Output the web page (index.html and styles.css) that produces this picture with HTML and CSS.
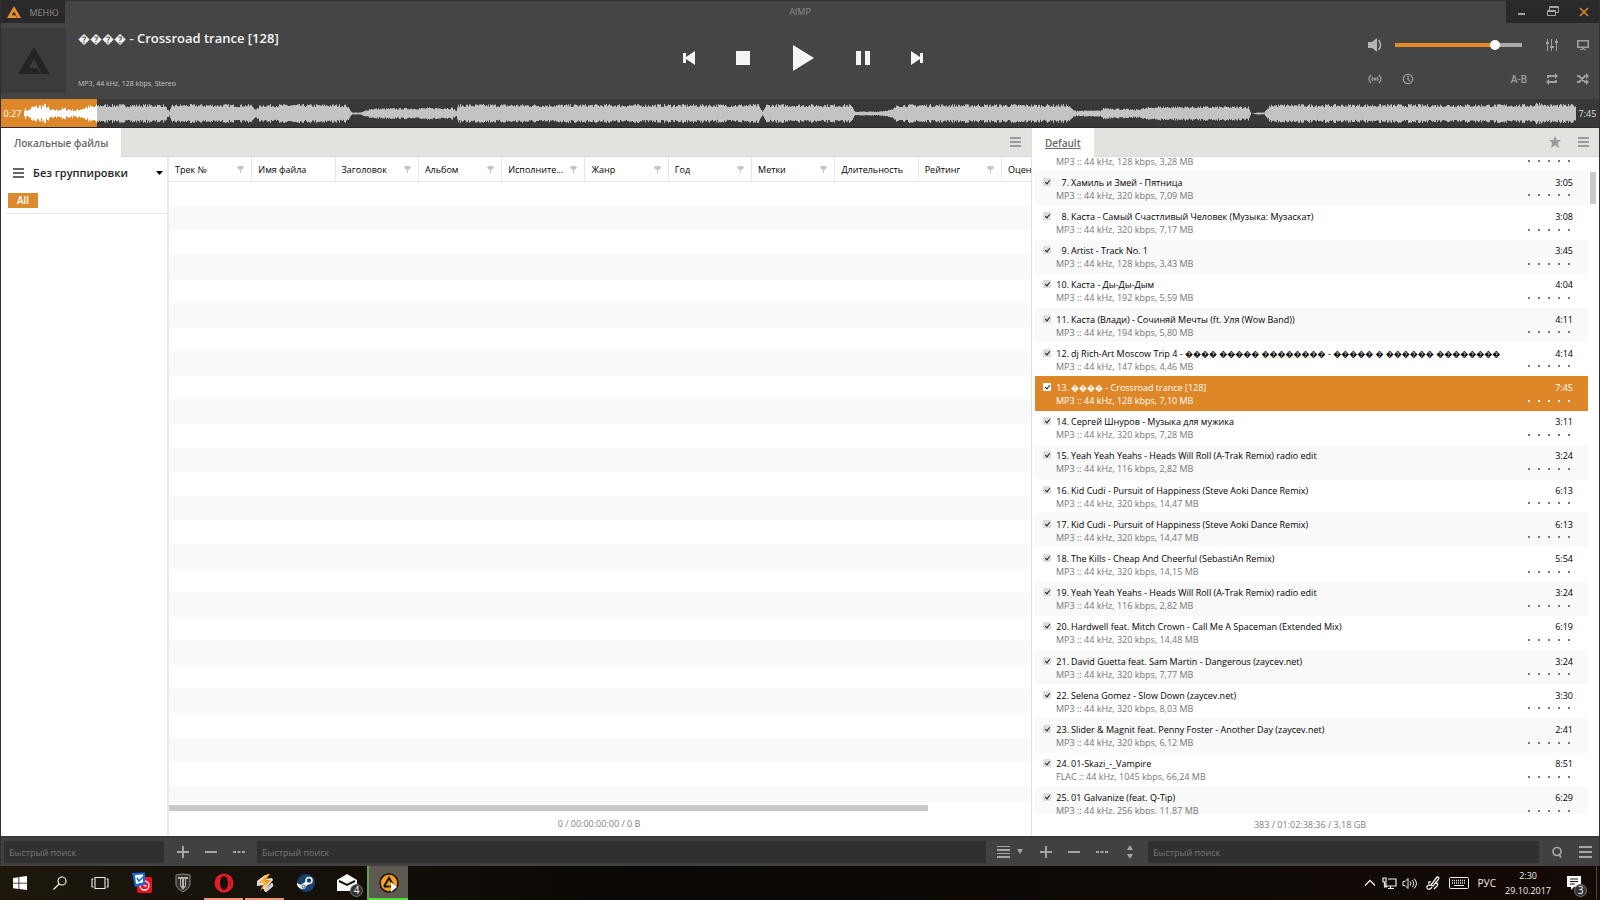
FILE: index.html
```html
<!DOCTYPE html>
<html lang="ru">
<head>
<meta charset="utf-8">
<title>AIMP</title>
<link rel="stylesheet" href="styles.css">
</head>
<body>
<div class="desktop">
<main class="app">
  <header class="titlebar">
    <button class="menu-button" type="button">
      <svg width="14" height="12" viewBox="0 0 32 27" fill="currentColor"><path fill-rule="evenodd" d="M0 27 16 0l16 27h-8l-8-15-5 9h8l4 6z"/></svg>
      <span>МЕНЮ</span>
    </button>
    <h1 class="app-title">AIMP</h1>
    <div class="window-buttons">
      <button type="button" aria-label="Свернуть"><svg width="12" height="12" fill="#a5a5a5"><path d="M2 7h7v2H2z"/></svg></button>
      <button type="button" aria-label="Развернуть"><svg width="12" height="12" fill="none" stroke="#a5a5a5"><path d="M.5 4.500h8v5h-8zM.5 5.500h8M2.500 4V.5h9v6H9M2.500 1.500h9"/></svg></button>
      <button type="button" aria-label="Закрыть"><svg width="12" height="12" stroke="#e08a2c" stroke-width="1.500"><path d="m2 2 8 8M10 2 2 10"/></svg></button>
    </div>
  </header>

  <section class="player">
    <div class="now-playing">
      <div class="cover"><svg width="32" height="27" viewBox="0 0 32 27" fill="#232323"><path d="M0 27 16 0l16 27h-8l-8-15-5 9h8l4 6z"/></svg></div>
      <div class="track-info">
        <h2><span class="unknown">����</span> - Crossroad trance [128]</h2>
        <p>MP3, 44 kHz, 128 kbps, Stereo</p>
      </div>
    </div>
    <div class="transport">
      <button type="button" aria-label="Назад"><svg width="14" height="14" fill="#f5f5f5"><path d="M1 2h3v4l9-6v14L4 8v4H1z"/></svg></button>
      <button type="button" aria-label="Стоп"><svg width="14" height="14" fill="#f5f5f5"><path d="M0 0h14v14H0z"/></svg></button>
      <button class="play" type="button" aria-label="Играть"><svg width="22" height="26" fill="#f5f5f5"><path d="M1 0v26l21-13z"/></svg></button>
      <button type="button" aria-label="Пауза"><svg width="14" height="14" fill="#f5f5f5"><path d="M0 0h5v14H0zM9 0h5v14H9z"/></svg></button>
      <button type="button" aria-label="Вперёд"><svg width="14" height="14" fill="#f5f5f5"><path d="M13 2h-3v4L1 0v14l9-6v4h3z"/></svg></button>
    </div>
    <div class="options">
      <button class="icon" type="button" aria-label="Звук"><svg width="16" height="16" fill="#b5b5b5"><path d="M1 5h4l5-4v14l-5-4H1z"/><path d="M11.500 3q4 5 0 10" fill="none" stroke="#b5b5b5" stroke-width="1.500"/></svg></button>
      <input class="volume" type="range" min="0" max="100" value="81" aria-label="Громкость">
      <button class="icon" type="button" aria-label="Эквалайзер"><svg width="12" height="12" fill="#a0a0a0"><path d="M1 0h1v12H1zM5 0h1v12H5zM10 0h1v12h-1zM0 3h3v2H0zM4 7h4v2H4zM9 2h3v2H9z"/></svg></button>
      <button class="icon" type="button" aria-label="Визуализация"><svg width="12" height="12" fill="#a0a0a0"><path d="M0 1h12v8H0zM1.500 2.500v5h9v-5zM5 9h2v1.500H5zM3 10h6v1H3z" fill-rule="evenodd"/></svg></button>
      <button class="icon" type="button" aria-label="Радио"><svg width="14" height="12" fill="none" stroke="#a0a0a0" stroke-width="1.200"><path d="M3 2Q-1 6 3 10M5 4Q3 6 5 8M11 2q4 4 0 8M9 4q2 2 0 4"/><circle cx="7" cy="6" r="1"/></svg></button>
      <button class="icon clock-icon" type="button" aria-label="Таймер"><svg width="12" height="12" fill="none" stroke="#a0a0a0" stroke-width="1.300"><circle cx="6" cy="6" r="4.700"/><path d="M6 3v3.500l2 1.500"/></svg></button>
      <button class="icon ab" type="button">A-B</button>
      <button class="icon" type="button" aria-label="Повтор"><svg width="12" height="12" fill="#a0a0a0"><path d="M1 5V2h8V0l3 3-3 3V4H3v1zM11 7v3H3v2L0 9l3-3v2h6V7z"/></svg></button>
      <button class="icon" type="button" aria-label="Случайный порядок"><svg width="12" height="12" fill="none" stroke="#a0a0a0" stroke-width="1.900"><path d="M0 3h2l6 6h2M0 9h2l6-6h2"/><path d="m9 0 3 3-3 3zM9 6l3 3-3 3z" fill="#a0a0a0" stroke="none"/></svg></button>
    </div>
  </section>

  <section class="seek" aria-label="Позиция">
    <span class="time">0:27</span>
    <svg class="wave" viewBox="0 0 1552 28" preserveAspectRatio="none"><path id="wave-played" fill="#fff"/><path id="wave-rest" fill="#c3c3c3"/></svg>
    <span class="time">7:45</span>
  </section>

  <div class="panes">
    <section class="library">
      <div class="tabs">
        <a class="tab" href="#library">Локальные файлы</a>
        <button class="icon push" type="button" aria-label="Меню"><svg width="11" height="10" fill="#9b9b9b"><path d="M0 0h11v2H0zM0 4h11v2H0zM0 8h11v2H0z"/></svg></button>
      </div>
      <div class="library-body">
        <aside class="sidebar">
          <button class="grouping" type="button">
            <svg width="11" height="10" fill="#666"><path d="M0 0h11v2H0zM0 4h11v2H0zM0 8h11v2H0z"/></svg>
            <span>Без группировки</span>
            <svg width="7" height="4"><path d="M0 0h7L3.500 4z"/></svg>
          </button>
          <div class="groups"><button class="chip" type="button">All</button></div>
        </aside>
        <div class="files">
          <table class="columns">
            <thead><tr id="columns"></tr></thead>
          </table>
          <div class="stripes" id="stripes"></div>
          <div class="hscroll"><div class="hthumb"></div></div>
          <p class="summary">0 / 00:00:00:00 / 0 B</p>
        </div>
      </div>
    </section>

    <section class="playlist">
      <div class="tabs">
        <a class="tab current" href="#default">Default</a>
        <button class="icon push" type="button" aria-label="Избранное"><svg width="12" height="12" fill="#9b9b9b"><path d="m6 0 1.800 4H12L8.800 7l1.200 5-4-2.700L2 12l1.200-5L0 4h4.200z"/></svg></button>
        <button class="icon" type="button" aria-label="Меню"><svg width="11" height="10" fill="#9b9b9b"><path d="M0 0h11v2H0zM0 4h11v2H0zM0 8h11v2H0z"/></svg></button>
      </div>
      <div class="list-area">
        <div class="list-clip"><ol class="tracks" id="tracks"></ol></div>
        <div class="vscroll"><div class="vthumb"></div></div>
      </div>
      <p class="summary">383 / 01:02:38:36 / 3,18 GB</p>
    </section>
  </div>

  <footer class="toolbar">
    <div class="tools library-tools">
      <input class="search small" type="text" placeholder="Быстрый поиск" aria-label="Поиск групп">
      <div class="tool-group">
        <button class="tool" type="button" aria-label="Добавить"><svg width="12" height="12" fill="#a5a5a5"><path d="M5 0h2v5h5v2H7v5H5V7H0V5h5z"/></svg></button>
        <button class="tool" type="button" aria-label="Удалить"><svg width="12" height="12" fill="#a5a5a5"><path d="M0 5h12v2H0z"/></svg></button>
        <button class="tool" type="button" aria-label="Ещё"><svg width="12" height="12" fill="#a5a5a5"><path d="M0 5h3v2H0zM4.500 5h3v2h-3zM9 5h3v2H9z"/></svg></button>
      </div>
      <input class="search" type="text" placeholder="Быстрый поиск" aria-label="Поиск файлов">
      <button class="view" type="button" aria-label="Вид"><svg width="26" height="12" fill="#a5a5a5"><path d="M0 0h13v1H0zM0 3h13v2H0zM0 7h13v1H0zM0 10h13v2H0zM20 3h6l-3 5z"/></svg></button>
    </div>
    <div class="tools playlist-tools">
      <div class="tool-group">
        <button class="tool" type="button" aria-label="Добавить"><svg width="12" height="12" fill="#a5a5a5"><path d="M5 0h2v5h5v2H7v5H5V7H0V5h5z"/></svg></button>
        <button class="tool" type="button" aria-label="Удалить"><svg width="12" height="12" fill="#a5a5a5"><path d="M0 5h12v2H0z"/></svg></button>
        <button class="tool" type="button" aria-label="Ещё"><svg width="12" height="12" fill="#a5a5a5"><path d="M0 5h3v2H0zM4.500 5h3v2h-3zM9 5h3v2H9z"/></svg></button>
        <button class="tool" type="button" aria-label="Сортировка"><svg width="6" height="14" fill="#a5a5a5"><path d="m0 5 3-5 3 5zM0 9h6l-3 5z"/></svg></button>
      </div>
      <input class="search" type="text" placeholder="Быстрый поиск" aria-label="Поиск в плейлисте">
      <button class="tool" type="button" aria-label="Найти"><svg width="12" height="12" fill="none" stroke="#a5a5a5" stroke-width="1.700"><circle cx="6" cy="5.500" r="4"/><path d="m7.500 8 2.500 3.500"/></svg></button>
      <button class="tool" type="button" aria-label="Меню"><svg width="13" height="12" fill="#a5a5a5"><path d="M0 0h13v2H0zM0 5h13v2H0zM0 10h13v2H0z"/></svg></button>
    </div>
  </footer>
</main>

<nav class="taskbar">
  <div class="launch">
    <button type="button" aria-label="Пуск"><svg width="14" height="14" fill="#fff"><path d="M0 2l5.500-.8v5.500H0zM6.300 1.100 14 0v6.700H6.300zM0 7.400h5.500V13L0 12.200zM6.300 7.400H14V14l-7.700-1z"/></svg></button>
    <button type="button" aria-label="Поиск"><svg width="14" height="14" fill="none" stroke="#eee" stroke-width="1.200"><circle cx="9" cy="5" r="4"/><path d="m6 8-5.500 5.500"/></svg></button>
    <button type="button" aria-label="Представление задач"><svg width="18" height="14" fill="none" stroke="#eee" stroke-width="1.100"><path d="M4 1.500h10v11H4zM2.500 3H1v8h1.500M15.500 3H17v8h-1.500"/></svg></button>
  </div>
  <div class="apps">
    <button type="button" aria-label="Проверка"><svg width="22" height="22"><rect x="6" y="5" width="15" height="16" rx="2" fill="#e8131d"/><circle cx="13.500" cy="13.500" r="4.500" fill="none" stroke="#fff" stroke-width="1.300"/><path d="M13 11v3h3" fill="none" stroke="#fff"/><path d="m1 1 13-.5v12L4 15z" fill="#1467e8"/><path d="m4 3 8-.5v8L5 12z" fill="#fff"/><path d="m6 6 2 3 4-4" fill="none" stroke="#1467e8" stroke-width="1.500"/></svg></button>
    <button type="button" aria-label="World of Tanks"><svg width="16" height="20"><path d="M1 2 8 1l7 1v10q-1 4-7 7-6-3-7-7z" fill="#34312d" stroke="#8d8b86"/><path d="M3 4h10v2h-2v7l-3 4-3-4V6H3z" fill="#b4b2ad"/><path d="M6.500 6v7M9.500 6v7" stroke="#34312d"/></svg></button>
    <button class="running" type="button" aria-label="Opera"><svg width="20" height="20"><circle cx="10" cy="10" r="9.500" fill="#e51c2b"/><ellipse cx="10" cy="10" rx="4" ry="7" fill="#130f09"/><path d="M12 1.500q10 8.500 0 17 4-3 4-8.500t-4-8.500" fill="#a70f1c"/></svg></button>
    <button class="running" type="button" aria-label="Winamp"><svg width="20" height="20"><path d="m2 8 8-6h3l-3 4 7-1 1 2-8 9H7l3-4-8 1z" fill="#e6e1d8"/><path d="m9 17 8-7 1 3-7 6zM2 11l6-5" fill="#d5d0c6" stroke="#d5d0c6"/><path d="m12 1-8 9h5l-4 8 11-11h-5l4-6z" fill="#f5951e"/><path d="M12 2 6 9h5l-3 6" fill="none" stroke="#ffcf5b"/></svg></button>
    <button type="button" aria-label="Steam"><svg width="20" height="20"><circle cx="10" cy="10" r="9" fill="#17426f"/><path d="M1 10q4 3 5 1l5-3 2 3-3 2q0 3-3 3-4 0-6-4z" fill="#fff"/><circle cx="13" cy="7.500" r="3" fill="#17426f" stroke="#fff" stroke-width="1.500"/><circle cx="7.500" cy="13.500" r="1.500" fill="none" stroke="#17426f"/></svg></button>
    <button type="button" aria-label="Почта"><svg width="20" height="18"><path d="M0 6 10 0l10 6v11H0z" fill="#fff"/><path d="m2 7 8 4 8-4" fill="none" stroke="#1a150c" stroke-width="2"/></svg><span class="badge mail-badge">4</span></button>
    <button class="active" type="button" aria-label="AIMP"><svg width="20" height="20"><circle cx="10" cy="10" r="9" fill="#f2a01f" stroke="#171106" stroke-width="1.500"/><path d="M5 13.500 10 5l5 8.500h-4.500M5 13.500h5" fill="none" stroke="#171106" stroke-width="2"/><path d="m12 9 6 5-6 5z" fill="#fff"/></svg></button>
  </div>
  <div class="tray">
    <svg class="chevron" width="12" height="8" fill="none" stroke="#eee" stroke-width="1.300"><path d="m1 6.500 5-5 5 5"/></svg>
    <svg width="15" height="13" fill="none" stroke="#eee" stroke-width="1.200"><path d="M6 2h8v7H4V6M6 11.500h6M8.500 9v3M1 1h3v4H1zM2.500 5v5H5"/></svg>
    <svg class="sound" width="15" height="13" fill="none" stroke="#eee"><path d="M1 4.500h2l3-3v10l-3-3H1zM8 4.500q2 2 0 4M10 3q3.500 3.500 0 7M12 1.500q5 5 0 10"/></svg>
    <svg width="14" height="14" fill="none" stroke="#eee" stroke-width="1.300"><path d="M5 9 11 1q3 0 1 3L7 10zM5 6q-3-1-2 2M5 9q-5 0-4 3 2 3 5-1M9 7q4 0 2 3l-3 3"/></svg>
    <svg width="20" height="12" fill="none" stroke="#eee"><rect x=".5" y=".5" width="19" height="11" rx="1"/><path d="M3 3.500h14M3 6h14" stroke-dasharray="1 1" stroke-width="1.300"/><path d="M5 8.500h10"/></svg>
    <span class="lang">РУС</span>
    <time class="clock"><span>2:30</span><span>29.10.2017</span></time>
    <button class="notify" type="button" aria-label="Уведомления"><svg width="14" height="14"><path d="M0 0h14v11H7l-3 3v-3H0z" fill="#fff"/><path d="M3 3h8M3 5.500h8M3 8h5" stroke="#1a150c"/></svg><span class="badge">3</span></button>
  </div>
</nav>
</div>
<script src="app.js"></script>
</body>
</html>
```

FILE: styles.css
```css
* { box-sizing: border-box; }
body { margin: 0; font-family: "Open Sans", "Noto Sans", "DejaVu Sans", sans-serif; font-size: 9px; line-height: 13px; color: #000; }
h1, h2, p, ol { margin: 0; padding: 0; font-weight: 400; }
button { border: 0; padding: 0; background: none; font: inherit; color: inherit; display: flex; align-items: center; justify-content: center; }
svg { display: block; flex: none; }
.desktop { height: 100vh; display: flex; flex-direction: column; overflow: hidden; }
.app { flex: 1; min-height: 0; display: flex; flex-direction: column; background: #454545; border: solid #2f2f2f; border-width: 1px 1px 0; }

.titlebar { display: grid; grid-template-columns: 1fr auto 1fr; height: 21px; flex: none; }
.menu-button { background: #292929; color: #e78f2e; width: 64px; gap: 8px; }
.menu-button span { color: #8f8f8a; }
.app-title { font-size: 9px; line-height: 22px; color: #8e8e8e; }
.window-buttons { justify-self: end; display: flex; background: #292929; }
.window-buttons button { width: 31px; }

.player { display: grid; grid-template-columns: 1fr auto 1fr; height: 77px; flex: none; }
.now-playing { display: flex; gap: 12px; padding-top: 6px; }
.cover { width: 65px; height: 65px; background: #3b3b3b; display: flex; align-items: center; justify-content: center; }
.track-info { display: flex; flex-direction: column; justify-content: space-between; color: #f5f5f5; padding-bottom: 6px; }
.track-info h2 { font-size: 13px; line-height: 21px; font-weight: 600; }
.track-info .unknown { font-size: 12px; }
.track-info p { font-size: 7px; line-height: 18px; color: #c4c4c4; }
.transport { display: flex; align-items: center; padding-left: 6px; padding-bottom: 5px; }
.transport button { width: 54px; height: 40px; }
.transport .play { width: 66px; }
.options { justify-self: end; display: grid; grid-template-columns: 32px 33px 1fr 36px 30px 32px; grid-template-rows: 34px 34px; width: 240px; padding-top: 6px; }
.icon { min-width: 28px; }
.volume { grid-column: 2 / 5; margin: auto 10px auto 4px; width: 127px; height: 12px; appearance: none; background: linear-gradient(to right, #e58a2b 79%, #aaa 0) center / 100% 4px no-repeat; }
.volume::-webkit-slider-thumb { appearance: none; width: 10px; height: 10px; border-radius: 50%; background: #fff; }
.ab { grid-column: 4; color: #a0a0a0; font-weight: 600; font-size: 10px; }
.clock-icon { grid-column: 2; }

.seek { display: flex; align-items: center; height: 29px; flex: none; border-bottom: 1px solid #282828; background: linear-gradient(to right, #dd8728 96px, #383838 0); }
.time { width: 23px; padding-top: 1px; text-align: center; color: #ddd; }
.seek .time:first-child { color: #fff; }
.wave { flex: 1; min-width: 0; height: 28px; }

.panes { flex: 1; min-height: 0; display: grid; grid-template-columns: 1030fr 568fr; background: #fff; }
.library, .playlist { min-width: 0; min-height: 0; display: flex; flex-direction: column; }
.playlist { border-left: 1px solid #dfe1e1; }
.tabs { display: flex; height: 29px; flex: none; background: #e2e3de; border-bottom: 1px solid #dadbd6; padding-right: 2px; }
.tab { display: flex; align-items: center; padding: 1px 13px 0; margin-bottom: -1px; background: #fff; color: #666; font-size: 10px; font-weight: 600; text-decoration: none; }
.tab.current { text-decoration: underline; }
.push { margin-left: auto; }
.library-body { flex: 1; min-height: 0; display: flex; }
.sidebar { width: 168px; border-right: 2px solid #e8eaeb; padding-left: 5px; }
.grouping { width: 100%; height: 31px; padding: 0 4px 0 7px; gap: 9px; font-size: 11px; font-weight: 600; color: #222; }
.grouping svg:last-child { margin-left: auto; }
.groups { padding: 5px 2px; height: 26px; border-bottom: 1px solid #e4e4e4; }
.chip { width: 30px; height: 15px; background: #dd8a2e; color: #fff; font-size: 10px; font-weight: 600; }
.files { flex: 1; min-width: 0; display: flex; flex-direction: column; overflow: hidden; }
.columns { width: 100%; table-layout: fixed; border-collapse: separate; border-spacing: 0; flex: none; }
.columns th { height: 25px; padding: 0 7px 0 6px; border: solid #e4e6e7; border-width: 0 1px 1px 0; font-weight: 400; text-align: left; white-space: nowrap; overflow: hidden; }
.columns th:last-child { width: 29px; border-right: 0; padding-right: 0; }
.columns th > div { display: flex; align-items: center; justify-content: space-between; gap: 4px; }
.columns span { overflow: hidden; text-overflow: ellipsis; }
.columns th:last-child span { text-overflow: clip; }
.stripes { flex: 1; min-height: 0; display: flex; flex-direction: column; overflow: hidden; }
.stripes-inner { flex: 1; margin-bottom: -7px; display: flex; flex-direction: column; }
.stripe { flex: 1; }
.stripe:nth-child(even) { background: #f9f9f9; }
.hscroll { padding-top: 2px; }
.hthumb { width: 88%; height: 6px; background: #c9c9c9; }
.summary { color: #808080; text-align: center; line-height: 22px; flex: none; padding-right: 11px; }
.files .summary { padding: 2px 2px 1px 0; }

.list-area { flex: 1; min-height: 0; display: flex; }
.list-clip { flex: 1; min-width: 0; margin-left: 3px; overflow: hidden; display: flex; flex-direction: column; }
.tracks { flex: 1; margin: -20px 0 -7px; list-style: none; display: flex; flex-direction: column; }
.vscroll { width: 11px; padding: 15px 3px 0 2px; }
.vthumb { height: 32px; background: #c9c9c9; }
.track { flex: 1; display: grid; grid-template-columns: 21px minmax(0, 1fr) auto; grid-template-rows: 13px 13px; align-content: center; padding: 1px 15px 0 0; white-space: nowrap; }
.track:nth-child(even) { background: #f9f9f9; }
.track input { appearance: none; width: 8px; height: 8px; margin: 2px 0 0 8px; border-radius: 1px; background: #ddddda; position: relative; }
.track input::after { content: ""; position: absolute; left: 3px; top: 1px; width: 2px; height: 4px; border: solid #222; border-width: 0 1px 1px 0; transform: rotate(40deg); }
.track .unknown { font-size: 8px; }
.number { display: inline-block; min-width: 13px; margin-right: 2px; text-align: right; white-space: pre; }
.meta { grid-column: 2; color: #777; }
.length { text-align: right; }
.rating { display: flex; gap: 8px; align-items: center; margin-right: 3px; }
.rating i { width: 2px; height: 2px; background: #777; }
.track.playing { background: #dd8728; color: #fff; }
.playing .meta { color: #fff; }
.track.playing input { background: #fff; }
.playing .rating i { background: #fff; }

.toolbar { display: grid; grid-template-columns: 1030fr 568fr; height: 30px; flex: none; background: #414141; border-top: 2px solid #3a3a3a; }
.tools { display: flex; align-items: center; min-width: 0; padding-left: 3px; }
.playlist-tools { padding-left: 1px; }
.tool-group { display: flex; }
.search { flex: 1; min-width: 0; height: 22px; border: 0; padding: 0 5px; background: #303030; color: #ccc; font: inherit; }
.search::placeholder { color: #777; }
.search.small { flex: none; width: 160px; }
.library-tools .tool-group { margin: 0 4px 0 5px; }
.playlist-tools .tool-group { margin-right: 4px; }
.tool { width: 28px; height: 22px; }
.search + .tool { margin-left: 4px; }
.view { width: 45px; height: 22px; padding-left: 2px; }

.taskbar { height: 34px; flex: none; display: flex; background: linear-gradient(to right, #1d170c, #16110a 18%, #0b0704 40%, #0f0a06 70%, #140a06); }
.launch, .apps, .tray { display: flex; }
.launch button { width: 40px; }
.apps button { width: 39px; margin: 0 1px; border-bottom: 2px solid transparent; border-top: 2px solid transparent; position: relative; }
.apps { margin-left: 1px; }
.apps .running { border-bottom-color: #ed9676; }
.apps .active { background: #5e5a50; border-bottom-color: #4fe03c; border-top-color: #5e5a50; box-shadow: -2px 0 #5fa650; margin-left: 2px; }
.badge { position: absolute; right: 9px; bottom: 2px; width: 13px; height: 13px; border-radius: 50%; background: #333; border: 1px solid #777; color: #fff; font-size: 10px; line-height: 11px; text-align: center; }
.apps .mail-badge { right: 3px; bottom: 1px; }
.tray { margin-left: auto; align-items: center; gap: 9px; color: #eee; margin-right: 3px; border-right: 1px solid #4a4540; }
.chevron { margin-right: -3px; }
.sound { margin-left: -4px; }
.lang { font-size: 10px; }
.clock { display: flex; flex-direction: column; align-items: center; line-height: 15px; }
.notify { position: relative; width: 36px; height: 32px; padding-right: 8px; }
```

FILE: app.js
```js
const columns = [
  ["Трек №", 1], ["Имя файла", 0], ["Заголовок", 1], ["Альбом", 1], ["Исполните...", 1],
  ["Жанр", 1], ["Год", 1], ["Метки", 1], ["Длительность", 0], ["Рейтинг", 1], ["Оценка", 0]
];
const filterIcon = '<svg width="7" height="7" fill="#c4c4c4"><path d="M1 0h5v1h1v1L4 4v3H3V4L0 2V1h1z"/></svg>';
document.getElementById("columns").innerHTML = columns
  .map(([name, filter]) => `<th><div><span>${name}</span>${filter ? filterIcon : ""}</div></th>`).join("");
document.getElementById("stripes").innerHTML =
  `<div class="stripes-inner">${'<div class="stripe"></div>'.repeat(26)}</div>`;

const bad = n => `<span class="unknown">${"\uFFFD".repeat(n)}</span>`;
const tracks = [
  [6, "", "MP3 :: 44 kHz, 128 kbps, 3,28 MB", ""],
  [7, "Хамиль и Змей - Пятница", "MP3 :: 44 kHz, 320 kbps, 7,09 MB", "3:05"],
  [8, "Каста - Самый Счастливый Человек (Музыка: Музаскат)", "MP3 :: 44 kHz, 320 kbps, 7,17 MB", "3:08"],
  [9, "Artist - Track No. 1", "MP3 :: 44 kHz, 128 kbps, 3,43 MB", "3:45"],
  [10, "Каста - Ды-Ды-Дым", "MP3 :: 44 kHz, 192 kbps, 5,59 MB", "4:04"],
  [11, "Каста (Влади) - Сочиняй Мечты (ft. Уля (Wow Band))", "MP3 :: 44 kHz, 194 kbps, 5,80 MB", "4:11"],
  [12, "dj Rich-Art Moscow Trip 4 - " + [bad(4), bad(5), bad(8), "-", bad(5), bad(1), bad(6), bad(8)].join(" "), "MP3 :: 44 kHz, 147 kbps, 4,46 MB", "4:14"],
  [13, bad(4) + " - Crossroad trance [128]", "MP3 :: 44 kHz, 128 kbps, 7,10 MB", "7:45"],
  [14, "Сергей Шнуров - Музыка для мужика", "MP3 :: 44 kHz, 320 kbps, 7,28 MB", "3:11"],
  [15, "Yeah Yeah Yeahs - Heads Will Roll (A-Trak Remix) radio edit", "MP3 :: 44 kHz, 116 kbps, 2,82 MB", "3:24"],
  [16, "Kid Cudi - Pursuit of Happiness (Steve Aoki Dance Remix)", "MP3 :: 44 kHz, 320 kbps, 14,47 MB", "6:13"],
  [17, "Kid Cudi - Pursuit of Happiness (Steve Aoki Dance Remix)", "MP3 :: 44 kHz, 320 kbps, 14,47 MB", "6:13"],
  [18, "The Kills - Cheap And Cheerful (SebastiAn Remix)", "MP3 :: 44 kHz, 320 kbps, 14,15 MB", "5:54"],
  [19, "Yeah Yeah Yeahs - Heads Will Roll (A-Trak Remix) radio edit", "MP3 :: 44 kHz, 116 kbps, 2,82 MB", "3:24"],
  [20, "Hardwell feat. Mitch Crown - Call Me A Spaceman (Extended Mix)", "MP3 :: 44 kHz, 320 kbps, 14,48 MB", "6:19"],
  [21, "David Guetta feat. Sam Martin - Dangerous (zaycev.net)", "MP3 :: 44 kHz, 320 kbps, 7,77 MB", "3:24"],
  [22, "Selena Gomez - Slow Down (zaycev.net)", "MP3 :: 44 kHz, 320 kbps, 8,03 MB", "3:30"],
  [23, "Slider &amp; Magnit feat. Penny Foster - Another Day (zaycev.net)", "MP3 :: 44 kHz, 320 kbps, 6,12 MB", "2:41"],
  [24, "01-Skazi_-_Vampire", "FLAC :: 44 kHz, 1045 kbps, 66,24 MB", "8:51"],
  [25, "01 Galvanize (feat. Q-Tip)", "MP3 :: 44 kHz, 256 kbps, 11,87 MB", "6:29"]
];
document.getElementById("tracks").innerHTML = tracks.map(([n, title, meta, length]) => `
  <li class="track${n === 13 ? " playing" : ""}">
    <input type="checkbox" checked id="t${n}" aria-label="${n}">
    <label for="t${n}">${title ? `<span class="number">${n}.</span>${title}` : ""}</label>
    <span class="length">${length}</span>
    <span class="meta">${meta}</span>
    <span class="rating"><i></i><i></i><i></i><i></i><i></i></span>
  </li>`).join("");

/* Loudness envelope: [position, half height] pairs joined by straight lines. */
const envelope = [
  [0, 6], [4, 4], [8, 8], [22, 10], [26, 4], [40, 6], [52, 4], [62, 8], [74, 9], [140, 9], [145, 2], [148, 9],
  [227, 9], [232, 4], [236, 9], [322, 9], [328, 1], [336, 1], [346, 5], [428, 6], [432, 3], [434, 9],
  [734, 9], [738, 2], [742, 9], [826, 9], [831, 2], [852, 2], [868, 4], [873, 9], [1043, 9], [1050, 3],
  [1076, 3], [1080, 6], [1110, 4], [1130, 7], [1224, 7], [1227, 0], [1233, 1], [1240, 1], [1246, 9],
  [1510, 9], [1512, 11], [1519, 11], [1520, 9], [1552, 9]
];
let seed = 7;
const random = () => (seed = (seed * 16807) % 2147483647) / 2147483647;
const level = x => {
  const i = Math.max(1, envelope.findIndex(p => p[0] > x));
  const [x0, y0] = envelope[i - 1], [x1, y1] = envelope[i];
  return y0 + (y1 - y0) * (x - x0) / (x1 - x0);
};
let played = "", rest = "";
for (let x = 0; x < 1552; x++) {
  const floor = x < 73 ? 0.45 : 0.7;
  const h = level(x) * (floor + (1.05 - floor) * random());
  const bar = `M${x} ${(14.5 - h).toFixed(1)}h1v${(2 * h).toFixed(1)}h-1z`;
  if (x < 73) played += bar; else rest += bar;
}
document.getElementById("wave-played").setAttribute("d", played);
document.getElementById("wave-rest").setAttribute("d", rest);
```
